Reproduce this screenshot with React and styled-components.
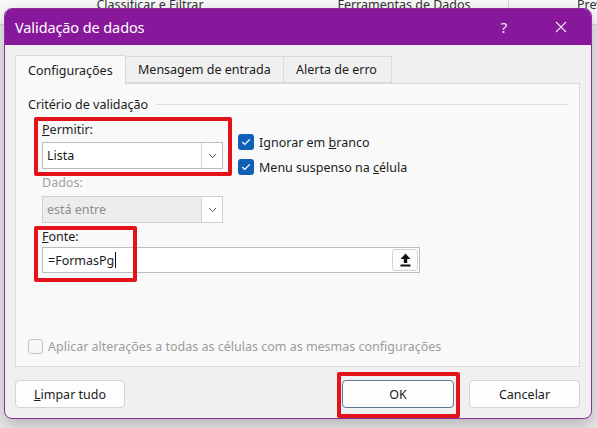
import React from 'react';
import styled, { createGlobalStyle } from 'styled-components';

const GlobalStyle = createGlobalStyle`
  html, body {
    margin: 0;
    padding: 0;
  }
  body {
    width: 597px;
    height: 428px;
    overflow: hidden;
    background: #e8e8e8;
    font-family: "Noto Sans", "Segoe UI", sans-serif;
    font-size: 12.5px;
    color: #1b1b1b;
  }
`;

const Desktop = styled.div`
  position: relative;
  width: 597px;
  height: 428px;
  overflow: hidden;
`;

const Ribbon = styled.div`
  display: grid;
  grid-template-columns: 300px 209px 1fr;
  height: 24px;
  background: #f8f8f8;
  border-bottom: 1px solid #d8d8d8;
`;

const RibbonGroup = styled.div`
  border-right: ${(p) => (p.$sep ? '1px solid #d4d4d4' : 'none')};
  text-align: ${(p) => (p.$align || 'center')};
  padding-left: ${(p) => p.$pad || 0}px;
  line-height: 16px;
  margin-top: -3px;
  font-size: 12.5px;
  color: #333;
  white-space: nowrap;
  overflow: hidden;
`;

/* the dialog floats over the spreadsheet window */
const Dialog = styled.div`
  position: absolute;
  left: 4px;
  top: 8px;
  width: 588px;
  height: 411px;
  box-sizing: border-box;
  display: flex;
  flex-direction: column;
  background: #f0f0f0;
  border: 1px solid #8c2f9d;
  border-radius: 8px;
  box-shadow: 0 6px 16px rgba(0, 0, 0, 0.22);
`;

const TitleBar = styled.div`
  height: 36px;
  flex: none;
  display: flex;
  align-items: center;
  padding-left: 10px;
  background: #87189b;
  border-radius: 7px 7px 0 0;
  color: #fff;
`;

const Title = styled.div`
  flex: 1;
  font-size: 14.5px;
  letter-spacing: -0.1px;
`;

const TitleButtons = styled.div`
  display: flex;
  gap: 11px;
  padding-right: 7px;
`;

const TitleButton = styled.div`
  width: 46px;
  height: 36px;
  display: flex;
  align-items: center;
  justify-content: center;
  font-size: 15px;
  color: #f4e4f7;
`;

const Body = styled.div`
  flex: 1;
  display: flex;
  flex-direction: column;
  padding: 11px 11px 10px 10px;
`;

const Tabs = styled.div`
  display: flex;
  height: 27px;
  position: relative;
  z-index: 1;
`;

const Tab = styled.div`
  width: ${(p) => p.$w}px;
  box-sizing: border-box;
  height: ${(p) => (p.$active ? 29 : 27)}px;
  margin-top: ${(p) => (p.$active ? -1 : 0)}px;
  margin-left: -1px;
  display: flex;
  align-items: center;
  padding-left: 12px;
  border: 1px solid #dadada;
  border-bottom: ${(p) => (p.$active ? 'none' : '1px solid #dadada')};
  background: ${(p) => (p.$active ? '#f9f9f9' : '#f0f0f0')};
  color: #1b1b1b;
  white-space: nowrap;
  &:first-child {
    margin-left: 0;
  }
`;

const Panel = styled.div`
  position: relative;
  height: 284px;
  box-sizing: border-box;
  display: flex;
  flex-direction: column;
  padding: 0 11px 12px 12px;
  background: #f9f9f9;
  border: 1px solid #dadada;
`;

const GroupHeader = styled.div`
  display: flex;
  align-items: center;
  gap: 8px;
  height: 16px;
  margin-top: 12px;
  &::after {
    content: '';
    flex: 1;
    height: 1px;
    background: #dcdcdc;
  }
`;

const Criteria = styled.div`
  display: grid;
  grid-template-columns: 181px 1fr;
  column-gap: 15px;
  padding-left: 14px;
`;

const Field = styled.div`
  display: flex;
  flex-direction: column;
`;

const Label = styled.div`
  height: 16px;
  line-height: 16px;
  margin-top: ${(p) => p.$mt}px;
  color: ${(p) => (p.$disabled ? '#a2a2a2' : '#1b1b1b')};
`;

const Select = styled.div`
  height: 27px;
  box-sizing: border-box;
  margin-top: ${(p) => p.$mt}px;
  display: flex;
  border: 1px solid ${(p) => (p.$disabled ? '#cfcfcf' : '#bdbdbd')};
  background: ${(p) => (p.$disabled ? '#ededed' : '#fff')};
  color: ${(p) => (p.$disabled ? '#8e8e8e' : '#1b1b1b')};
`;

const SelectValue = styled.div`
  flex: 1;
  display: flex;
  align-items: center;
  padding-left: 4px;
`;

const DropButton = styled.div`
  width: 20px;
  display: flex;
  align-items: center;
  justify-content: center;
  background: #fff;
  border-left: 1px solid #d6d6d6;
`;

const Options = styled.div`
  display: flex;
  flex-direction: column;
  gap: 9px;
  padding-top: 22px;
`;

const CheckRow = styled.label`
  display: flex;
  align-items: center;
  gap: 5px;
  height: 16px;
  color: ${(p) => (p.$disabled ? '#9c9c9c' : '#1b1b1b')};
  white-space: nowrap;
`;

const Box = styled.span`
  width: ${(p) => (p.$checked ? 16 : 15)}px;
  height: ${(p) => (p.$checked ? 16 : 15)}px;
  box-sizing: border-box;
  flex: none;
  display: flex;
  align-items: center;
  justify-content: center;
  border-radius: 3px;
  background: ${(p) => (p.$checked ? '#1160b7' : '#f7f7f7')};
  border: ${(p) => (p.$checked ? 'none' : '1px solid #c4c4c4')};
`;

const SourceField = styled.div`
  display: flex;
  flex-direction: column;
  padding-left: 14px;
`;

const SourceInput = styled.div`
  width: 378px;
  height: 26px;
  box-sizing: border-box;
  margin-top: 2px;
  display: flex;
  align-items: center;
  padding: 1px 1px 1px 5px;
  background: #fff;
  border: 1px solid #bdbdbd;
`;

const InputText = styled.div`
  flex: 1;
  display: flex;
  align-items: center;
`;

const Caret = styled.span`
  width: 1px;
  height: 16px;
  background: #111;
  margin-left: 1px;
`;

const RefButton = styled.div`
  width: 26px;
  height: 22px;
  box-sizing: border-box;
  display: flex;
  align-items: center;
  justify-content: center;
  border: 1px solid #d2d2d2;
  border-radius: 3px;
  background: #fcfcfc;
`;

const ApplyRow = styled.div`
  margin-top: auto;
`;

const Footer = styled.div`
  display: flex;
  justify-content: space-between;
  padding-top: 13px;
`;

const ButtonGroup = styled.div`
  display: flex;
  gap: 15px;
`;

const Button = styled.div`
  position: relative;
  width: ${(p) => p.$w}px;
  height: 28px;
  box-sizing: border-box;
  display: flex;
  align-items: center;
  justify-content: center;
  background: #fdfdfd;
  border: 1px solid ${(p) => (p.$default ? '#5b7899' : '#d3d3d3')};
  border-radius: 4px;
  color: #1b1b1b;
`;

/* red annotation boxes drawn over the screenshot */
const Highlight = styled.div`
  position: absolute;
  box-sizing: border-box;
  border: 4px solid #e3131a;
  border-radius: 2px;
  pointer-events: none;
  z-index: 2;
`;

const Chevron = () => (
  <svg width="9" height="6" viewBox="0 0 9 6">
    <polyline points="1,1 4.5,4.5 8,1" fill="none" stroke="#5a5a5a" strokeWidth="1" />
  </svg>
);

const Check = () => (
  <svg width="10" height="8" viewBox="0 0 10 8">
    <polyline points="1.2,4 3.8,6.4 8.8,1.4" fill="none" stroke="#fff" strokeWidth="1.3" />
  </svg>
);

const UploadIcon = () => (
  <svg width="11" height="14" viewBox="0 0 11 14">
    <path d="M5.5 0.5 L10.5 6 L7.2 6 L7.2 10 L3.8 10 L3.8 6 L0.5 6 Z" fill="#111" />
    <rect x="0.5" y="11.5" width="10" height="2" fill="#111" />
  </svg>
);

const CloseIcon = () => (
  <svg width="12" height="12" viewBox="0 0 12 12">
    <path d="M1 1 L11 11 M11 1 L1 11" stroke="#f4e4f7" strokeWidth="1.1" />
  </svg>
);

export default function App() {
  return (
    <Desktop>
      <GlobalStyle />
      <Ribbon>
        <RibbonGroup>Classificar e Filtrar</RibbonGroup>
        <RibbonGroup $sep>Ferramentas de Dados</RibbonGroup>
        <RibbonGroup $align="left" $pad={68}>Previsão</RibbonGroup>
      </Ribbon>

      <Dialog>
        <TitleBar>
          <Title>Validação de dados</Title>
          <TitleButtons>
            <TitleButton>?</TitleButton>
            <TitleButton>
              <CloseIcon />
            </TitleButton>
          </TitleButtons>
        </TitleBar>

        <Body>
          <Tabs>
            <Tab $active $w={111}>Configurações</Tab>
            <Tab $w={159}>Mensagem de entrada</Tab>
            <Tab $w={109}>Alerta de erro</Tab>
          </Tabs>

          <Panel>
            <GroupHeader>Critério de validação</GroupHeader>

            <Criteria>
              <Field>
                <Label $mt={10}>
                  <u>P</u>ermitir:
                </Label>
                <Select $mt={4}>
                  <SelectValue>Lista</SelectValue>
                  <DropButton>
                    <Chevron />
                  </DropButton>
                </Select>
                <Label $mt={6} $disabled>
                  Dados:
                </Label>
                <Select $mt={5} $disabled>
                  <SelectValue>está entre</SelectValue>
                  <DropButton>
                    <Chevron />
                  </DropButton>
                </Select>
              </Field>

              <Options>
                <CheckRow>
                  <Box $checked>
                    <Check />
                  </Box>
                  <span>
                    Ignorar em <u>b</u>ranco
                  </span>
                </CheckRow>
                <CheckRow>
                  <Box $checked>
                    <Check />
                  </Box>
                  <span>
                    Menu suspenso na <u>c</u>élula
                  </span>
                </CheckRow>
              </Options>
            </Criteria>

            <SourceField>
              <Label $mt={6}>
                <u>F</u>onte:
              </Label>
              <SourceInput>
                <InputText>
                  =FormasPg
                  <Caret />
                </InputText>
                <RefButton>
                  <UploadIcon />
                </RefButton>
              </SourceInput>
            </SourceField>

            <ApplyRow>
              <CheckRow $disabled>
                <Box />
                <span>Aplicar alterações a todas as células com as mesmas configurações</span>
              </CheckRow>
            </ApplyRow>

            <Highlight style={{ left: 18, top: 33, width: 198, height: 59 }} />
            <Highlight style={{ left: 18, top: 142, width: 103, height: 56 }} />
          </Panel>

          <Footer>
            <Button $w={110}>
              <span>
                <u>L</u>impar tudo
              </span>
            </Button>
            <ButtonGroup>
              <Button $w={112} $default>
                OK
                <Highlight style={{ left: -6, top: -9, right: -7, bottom: -11 }} />
              </Button>
              <Button $w={111}>Cancelar</Button>
            </ButtonGroup>
          </Footer>
        </Body>
      </Dialog>
    </Desktop>
  );
}
